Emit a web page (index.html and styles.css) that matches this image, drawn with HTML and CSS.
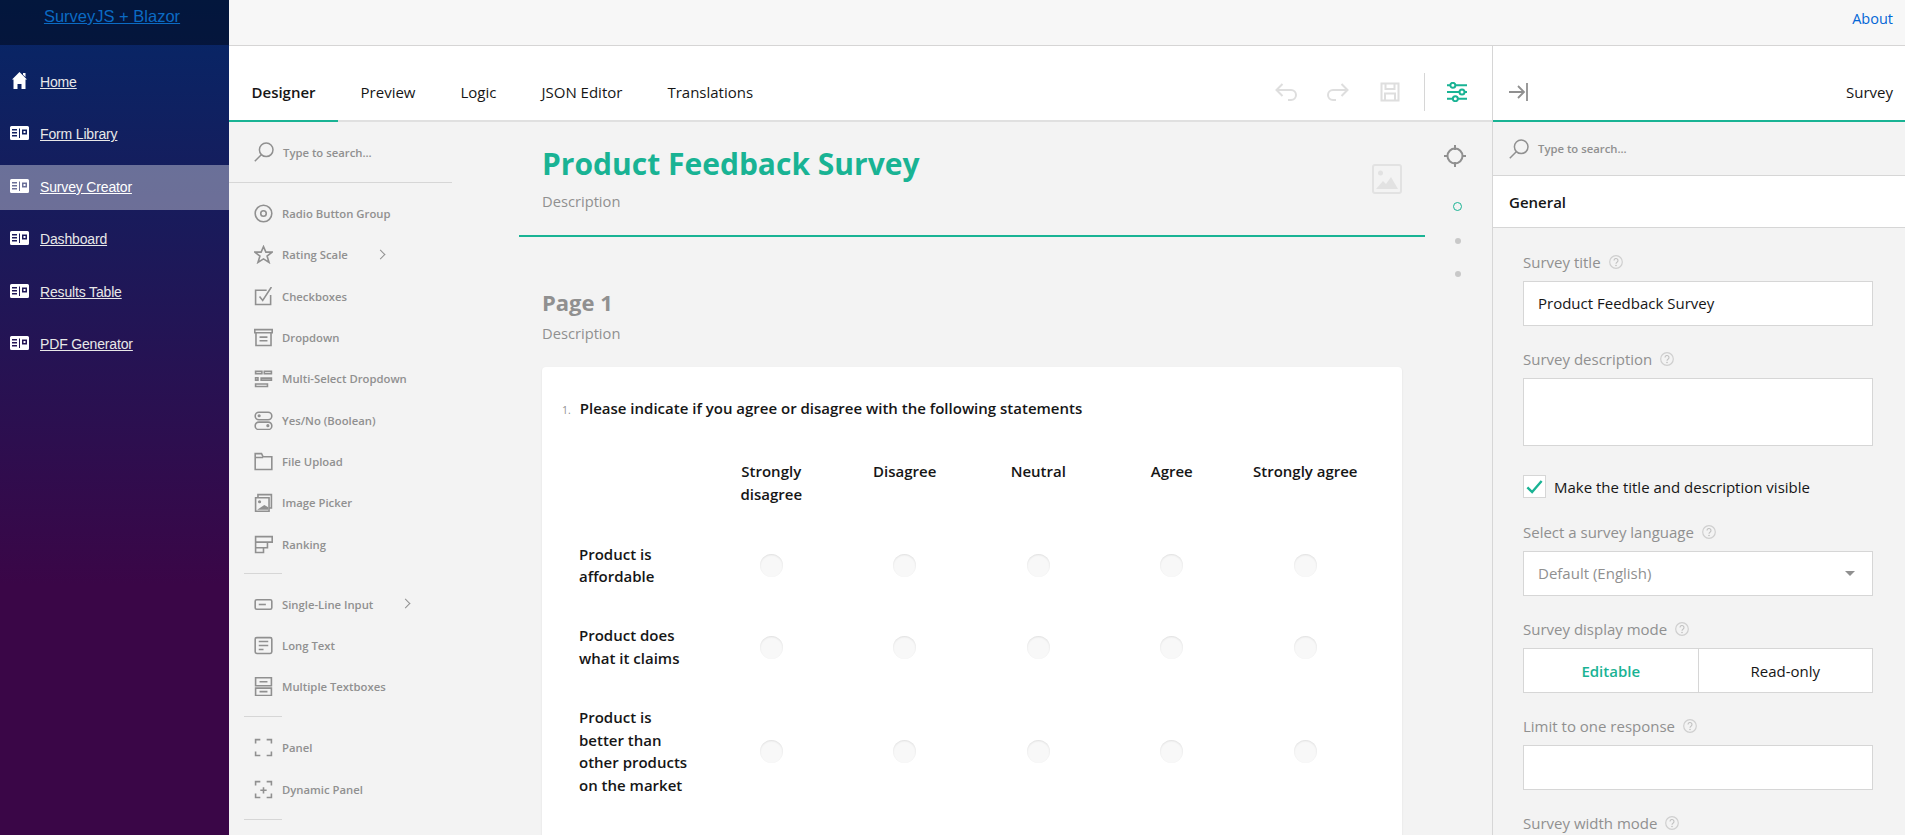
FILE: index.html
```html
<!DOCTYPE html>
<html lang="en">
<head>
<meta charset="utf-8">
<title>SurveyJS + Blazor</title>
<link rel="stylesheet" href="styles.css">
</head>
<body>
<svg class="defs" width="0" height="0" aria-hidden="true">
  <symbol id="i-card" viewBox="0 0 19 14"><path fill="#fff" fill-rule="evenodd" d="M1.500 0h16A1.500 1.500 0 0 1 19 1.500v11a1.500 1.500 0 0 1-1.500 1.500h-16A1.500 1.500 0 0 1 0 12.500v-11A1.500 1.500 0 0 1 1.500 0ZM2 3v1.500h5V3Zm0 3v1.500h5V6Zm0 3v1.500h5V9Zm7-6.500V12h1V2.500ZM12 3.500v5h5v-5Zm1.500 1.500h2v2h-2Z"/></symbol>
  <symbol id="i-search" viewBox="0 0 20 20"><circle cx="12.200" cy="7.800" r="6.800" fill="none" stroke="currentColor" stroke-width="1.500"/><path d="M7.500 12.500 .8 19.200" stroke="currentColor" stroke-width="1.500" fill="none"/></symbol>
  <symbol id="i-help" viewBox="0 0 14 14"><circle cx="7" cy="7" r="6.300" fill="none" stroke="#cfcfcf" stroke-width="1.200"/><path d="M5 5.500a2 2 0 1 1 3 1.700c-.7.400-1 .8-1 1.600" fill="none" stroke="#c0c0c0" stroke-width="1.100"/><circle cx="7" cy="10.500" r=".8" fill="#c0c0c0"/></symbol>
</svg>

<div class="app">
  <aside class="sidebar">
    <div class="brand"><a class="brand-link" href="#">SurveyJS + Blazor</a></div>
    <nav class="nav">
      <a class="nav-item" href="#">
        <svg class="nav-icon" viewBox="0 0 19 19"><path fill="#fff" d="M9.500 1 17 8.500h-1.500V18h-4v-5h-4v5h-4V8.500H2l6-6 .5-.5ZM13 2h2.500v4L13 3.800Z"/></svg>
        <span>Home</span>
      </a>
      <a class="nav-item" href="#"><svg class="nav-icon rich"><use href="#i-card"/></svg><span>Form Library</span></a>
      <a class="nav-item active" href="#"><svg class="nav-icon rich"><use href="#i-card"/></svg><span>Survey Creator</span></a>
      <a class="nav-item" href="#"><svg class="nav-icon rich"><use href="#i-card"/></svg><span>Dashboard</span></a>
      <a class="nav-item" href="#"><svg class="nav-icon rich"><use href="#i-card"/></svg><span>Results Table</span></a>
      <a class="nav-item" href="#"><svg class="nav-icon rich"><use href="#i-card"/></svg><span>PDF Generator</span></a>
    </nav>
  </aside>

  <main class="main">
    <header class="topbar"><a class="about" href="#">About</a></header>
    <div class="creator">
      <section class="workspace">
        <div class="tabbar">
          <div class="tabs">
            <div class="tab selected">Designer</div>
            <div class="tab">Preview</div>
            <div class="tab">Logic</div>
            <div class="tab">JSON Editor</div>
            <div class="tab">Translations</div>
          </div>
          <div class="tools">
            <svg class="tool" viewBox="0 0 24 24"><path d="M8.500 4 2.500 10l6 6M2.500 10H17a5 5 0 0 1 5 5v0a5 5 0 0 1-5 5h-3" fill="none" stroke="#dedede" stroke-width="2"/></svg>
            <svg class="tool" viewBox="0 0 24 24"><path d="M15.500 4l6 6-6 6M21.500 10H7a5 5 0 0 0-5 5v0a5 5 0 0 0 5 5h3" fill="none" stroke="#dedede" stroke-width="2"/></svg>
            <svg class="tool" viewBox="0 0 24 24"><path d="M3.500 3.500h17v17h-17ZM7.500 3.500v5.500h9V3.500M7 20.500v-7h10v7" fill="none" stroke="#dedede" stroke-width="2"/></svg>
            <span class="tool-sep"></span>
            <svg class="tool settings" viewBox="0 0 24 24"><g fill="none" stroke="#19b394" stroke-width="2.400"><circle cx="7" cy="4" r="3"/><circle cx="18" cy="12" r="3"/><circle cx="10" cy="20" r="3"/><path d="M10 4h14M0 12h15M21 12h3M13 20h11M0 4h4M0 20h7"/></g></svg>
          </div>
        </div>

        <div class="design">
          <div class="toolbox">
            <div class="tb-search">
              <svg class="tb-search-icon"><use href="#i-search"/></svg>
              <span>Type to search...</span>
            </div>
            <ul class="tb-list">
              <li class="tb-item"><svg class="ti" viewBox="0 0 24 24"><circle cx="12" cy="12" r="10.500" class="s"/><circle cx="12" cy="12" r="3.500" class="s"/></svg>Radio Button Group</li>
              <li class="tb-item"><svg class="ti" viewBox="0 0 24 24"><path class="s" d="M12 2l3 7h8l-6.500 5 2.500 8-7-4.500L5 22l2.500-8L1 9h8Z"/></svg>Rating Scale<span class="chev chev-a"></span></li>
              <li class="tb-item"><svg class="ti" viewBox="0 0 24 24"><path class="s" d="M21 10v12H2V4h14"/><path class="s" d="M7 12l4 5L22 0"/></svg>Checkboxes</li>
              <li class="tb-item"><svg class="ti" viewBox="0 0 24 24"><path class="s" d="M1 2h22v4H1ZM2.500 6v16h19V6M7 11.500h10M7 16h10"/></svg>Dropdown</li>
              <li class="tb-item"><svg class="ti" viewBox="0 0 24 24"><path class="s" d="M2 3h8v3H2ZM13 3h9v3h-9ZM2 11h3v3H2ZM9 11.500h13v2.500H9ZM2 19h15v3H2Z"/></svg>Multi-Select Dropdown</li>
              <li class="tb-item"><svg class="ti" viewBox="0 0 24 24"><rect x="1.500" y="1.500" width="21" height="9.500" rx="4.700" class="s"/><rect x="1.500" y="14" width="21" height="9.500" rx="4.700" class="s"/><circle cx="6.500" cy="6" r="2" fill="#909090"/><circle cx="17.500" cy="18.500" r="2" fill="#909090"/></svg>Yes/No (Boolean)</li>
              <li class="tb-item"><svg class="ti" viewBox="0 0 24 24"><path class="s" d="M1.500 22V2h8l2 4h11v16ZM1.500 7h10"/></svg>File Upload</li>
              <li class="tb-item"><svg class="ti" viewBox="0 0 24 24"><path class="s" d="M2 6h17v17H2ZM5 6V2h17v17h-3"/><circle cx="7" cy="11" r="2" fill="#909090"/><path fill="#909090" d="M4 21l9-6 5 3v3Z"/></svg>Image Picker</li>
              <li class="tb-item"><svg class="ti" viewBox="0 0 24 24"><path class="s" d="M2 2h21v7H2ZM2 9h15v7H2ZM2 16h10v6H2Z"/></svg>Ranking</li>
              <li class="tb-sep tb-sep-a"></li>
              <li class="tb-item"><svg class="ti" viewBox="0 0 24 24"><rect x="1.500" y="6" width="21" height="12" rx="2" class="s"/><path class="s" d="M6 12h9"/></svg>Single-Line Input<span class="chev chev-b"></span></li>
              <li class="tb-item"><svg class="ti" viewBox="0 0 24 24"><rect x="1.500" y="2" width="21" height="20" rx="2" class="s"/><path class="s" d="M6 7h12M6 12h12M6 17h6"/></svg>Long Text</li>
              <li class="tb-item"><svg class="ti" viewBox="0 0 24 24"><path class="s" d="M2 1h20v10H2ZM2 14h20v9.500H2ZM7 6h10M7 18.500h10"/></svg>Multiple Textboxes</li>
              <li class="tb-sep tb-sep-b"></li>
              <li class="tb-item"><svg class="ti" viewBox="0 0 24 24"><path class="s" d="M2 7V2h6M16 2h6v5M22 17v5h-6M8 22H2v-5"/></svg>Panel</li>
              <li class="tb-item"><svg class="ti" viewBox="0 0 24 24"><path class="s" d="M2 7V2h6M16 2h6v5M22 17v5h-6M8 22H2v-5M12 9v8M8 13h8"/></svg>Dynamic Panel</li>
              <li class="tb-sep tb-sep-c"></li>
            </ul>
          </div>

          <div class="canvas">
            <div class="survey-head">
              <div class="survey-head-text">
                <h1 class="survey-title">Product Feedback Survey</h1>
                <div class="desc">Description</div>
              </div>
              <svg class="logo-ph" viewBox="0 0 30 30"><rect x="1" y="1" width="28" height="28" rx="2" fill="none" stroke="#e2e2e2" stroke-width="2"/><circle cx="8.500" cy="9" r="2.500" fill="#e2e2e2"/><path fill="#e2e2e2" d="M4 25l7-8 3 3 5-7 7 12Z"/></svg>
            </div>
            <div class="page">
              <h2 class="page-title">Page 1</h2>
              <div class="desc">Description</div>
              <div class="q-card">
                <div class="q-head"><span class="q-num">1.</span><span class="q-title">Please indicate if you agree or disagree with the following statements</span></div>
                <table class="matrix">
                  <thead>
                    <tr><th class="rowhead"></th><th>Strongly disagree</th><th>Disagree</th><th>Neutral</th><th>Agree</th><th>Strongly agree</th></tr>
                  </thead>
                  <tbody>
                    <tr><td class="rowhead">Product is affordable</td><td><span class="radio"></span></td><td><span class="radio"></span></td><td><span class="radio"></span></td><td><span class="radio"></span></td><td><span class="radio"></span></td></tr>
                    <tr><td class="rowhead">Product does what it claims</td><td><span class="radio"></span></td><td><span class="radio"></span></td><td><span class="radio"></span></td><td><span class="radio"></span></td><td><span class="radio"></span></td></tr>
                    <tr><td class="rowhead">Product is better than other products on the market</td><td><span class="radio"></span></td><td><span class="radio"></span></td><td><span class="radio"></span></td><td><span class="radio"></span></td><td><span class="radio"></span></td></tr>
                  </tbody>
                </table>
              </div>
            </div>
          </div>

          <div class="pager">
            <svg class="target" viewBox="0 0 24 24"><circle cx="12" cy="12" r="7.500" fill="none" stroke="#909090" stroke-width="2"/><path d="M12 1v5M12 18v5M1 12h4M19 12h4" stroke="#909090" stroke-width="2"/></svg>
            <span class="dot current"></span>
            <span class="dot"></span>
            <span class="dot"></span>
          </div>
        </div>
      </section>

      <aside class="props">
        <div class="props-head">
          <svg class="collapse" viewBox="0 0 19 24"><path d="M0 12h15M9 6l6 6-6 6M18 3v18" fill="none" stroke="#909090" stroke-width="1.800"/></svg>
          <span class="props-name">Survey</span>
        </div>
        <div class="props-search">
          <svg class="tb-search-icon"><use href="#i-search"/></svg>
          <span>Type to search...</span>
        </div>
        <div class="props-cat">General</div>
        <form class="props-form">
          <div class="field">
            <div class="lbl">Survey title <svg class="help"><use href="#i-help"/></svg></div>
            <div class="box">Product Feedback Survey</div>
          </div>
          <div class="field">
            <div class="lbl">Survey description <svg class="help"><use href="#i-help"/></svg></div>
            <div class="box box-tall"></div>
          </div>
          <div class="check-row">
            <span class="check"><svg class="check-mark" viewBox="0 0 24 24"><path d="M3 13l6 6L21 5" fill="none" stroke="#19b394" stroke-width="3"/></svg></span>
            <span>Make the title and description visible</span>
          </div>
          <div class="field">
            <div class="lbl">Select a survey language <svg class="help"><use href="#i-help"/></svg></div>
            <div class="box box-select"><span>Default (English)</span><span class="caret"></span></div>
          </div>
          <div class="field">
            <div class="lbl">Survey display mode <svg class="help"><use href="#i-help"/></svg></div>
            <div class="btn-group"><span class="seg on">Editable</span><span class="seg">Read-only</span></div>
          </div>
          <div class="field">
            <div class="lbl">Limit to one response <svg class="help"><use href="#i-help"/></svg></div>
            <div class="box"></div>
          </div>
          <div class="field">
            <div class="lbl">Survey width mode <svg class="help"><use href="#i-help"/></svg></div>
          </div>
        </form>
      </aside>
    </div>
  </main>
</div>
</body>
</html>
```

FILE: styles.css
```css
* { box-sizing: border-box; }
html, body { margin: 0; height: 100%; overflow: hidden; }
body { font-family: "Open Sans", "Liberation Sans", sans-serif; font-size: 15px; color: #161616; background: #fff; }
.defs { position: absolute; }

.app { display: flex; height: 835px; }

/* sidebar */
.sidebar { width: 229px; flex: none; background: linear-gradient(180deg, #052767 0%, #3a0647 70%); font-family: "Liberation Sans", Arial, sans-serif; }
.brand { height: 45px; background: rgba(0,0,0,.4); text-align: center; padding: 6px 5px 0 0; }
.brand-link { color: #0b6bc4; font-size: 16.500px; text-decoration: underline; line-height: 20px; }
.nav { padding-top: 15px; display: flex; flex-direction: column; gap: 7.500px; }
.nav-item { height: 45px; display: flex; align-items: center; gap: 11px; padding: 0 0 1.500px 10px; color: #e8e8e8; font-size: 14px; letter-spacing: -.16px; text-decoration: underline; }
.nav-item.active { background: rgba(255,255,255,.37); color: #fff; }
.nav-icon { width: 19px; height: 19px; flex: none; margin-top: -2px; }
.nav-icon.rich { height: 14px; }

/* top bar */
.main { flex: 1; min-width: 0; display: flex; flex-direction: column; }
.topbar { height: 46px; flex: none; background: #f7f7f7; border-bottom: 1px solid #d6d5d5; display: flex; justify-content: flex-end; align-items: center; padding: 0 12px 8px 0; }
.about { color: #0366d6; font-size: 14.500px; text-decoration: none; }

.creator { flex: 1; display: flex; min-height: 0; }
.workspace { flex: 1; min-width: 0; display: flex; flex-direction: column; }

/* tabs */
.tabbar { height: 76px; flex: none; display: flex; align-items: flex-start; justify-content: space-between; border-bottom: 2px solid #e0e0e0; background: #fff; }
.tabs { display: flex; }
.tab { padding: 18px 22.500px 0; height: 76px; display: flex; align-items: center; border-bottom: 2px solid transparent; font-size: 15px; color: #161616; }
.tab.selected { font-weight: 600; border-bottom-color: #19b394; }
.tools { display: flex; align-items: center; height: 74px; padding: 18px 25px 0 0; }
.tool { width: 24px; height: 24px; margin-left: 28px; }
.tool-sep { width: 1px; height: 38px; background: #d6d6d6; margin-left: 22px; }
.tool.settings { width: 20px; height: 20px; margin-left: 22px; }

/* design surface */
.design { flex: 1; min-height: 0; display: flex; background: #f3f3f3; }

.toolbox { width: 223px; flex: none; }
.tb-search { height: 61px; display: flex; align-items: center; gap: 9px; padding: 0 0 0 25px; border-bottom: 1px solid #d6d6d6; font-size: 11.300px; font-weight: 600; color: #909090; }
.tb-search-icon { width: 20px; height: 20px; color: #909090; flex: none; }
.tb-list { list-style: none; margin: 10px 0 0; padding: 0; }
.tb-item { position: relative; height: 41.300px; display: flex; align-items: center; gap: 9px; padding-left: 25px; font-size: 11.300px; font-weight: 600; color: #909090; }
.ti { width: 19px; height: 19px; flex: none; }
.s { fill: none; stroke: #909090; stroke-width: 2; }
.tb-sep { width: 38px; height: 1px; background: #d6d6d6; margin-left: 15px; }
.tb-sep-a { margin-top: 8.300px; margin-bottom: 9.400px; }
.tb-sep-b { margin-top: 8.700px; margin-bottom: 10.400px; }
.tb-sep-c { margin-top: 9px; }
.chev { position: absolute; top: 17px; width: 7px; height: 7px; border-top: 1px solid #909090; border-right: 1px solid #909090; transform: rotate(45deg); }
.chev-a { left: 148px; }
.chev-b { left: 173px; }

.canvas { flex: 1; min-width: 0; overflow: hidden; padding-left: 67px; }
.survey-head { width: 906px; height: 115px; border-bottom: 2px solid #19b394; padding: 20px 23px 0; display: flex; justify-content: space-between; }
.survey-title { margin: 0; font-size: 30px; line-height: 44px; font-weight: 700; color: #19b394; }
.desc { font-size: 14.700px; line-height: 20px; color: #909090; }
.survey-head-text .desc { margin-top: 5px; }
.logo-ph { width: 30px; height: 30px; margin-top: 22px; }
.page { padding: 0 0 0 23px; width: 883px; }
.page-title { margin: 47px 0 0; font-size: 22px; line-height: 36px; font-weight: 700; color: #909090; }
.page .desc { margin-top: 3px; }
.q-card { margin-top: 24px; width: 860px; height: 500px; background: #fff; border-radius: 4px; box-shadow: 0 1px 2px rgba(0,0,0,.1); padding: 30px 20px 60px; }
.q-head { display: flex; align-items: baseline; gap: 9px; }
.q-num { font-size: 10.500px; color: #909090; }
.q-title { font-size: 15px; line-height: 22px; font-weight: 600; color: #161616; }

.matrix { border-collapse: collapse; table-layout: fixed; width: 813px; margin-top: 41px; margin-left: -3px; }
.matrix th { width: 133.500px; padding: 0 14px 18.500px; font-size: 15px; line-height: 23px; font-weight: 600; vertical-align: top; text-align: center; color: #161616; }
.matrix th.rowhead { width: 145.500px; }
.matrix td { padding: 0; text-align: center; vertical-align: middle; }
.matrix td.rowhead { text-align: left; padding: 18px 13.500px 18.800px 20px; font-size: 15px; line-height: 22.500px; font-weight: 600; }
.radio { display: inline-block; width: 23px; height: 23px; border-radius: 50%; background: #f8f8f8; box-shadow: inset 0 1px 2px rgba(0,0,0,.1); vertical-align: middle; }

.pager { width: 67px; flex: none; display: flex; flex-direction: column; align-items: center; padding-top: 22px; }
.target { width: 24px; height: 24px; margin-left: -7px; }
.dot { width: 6px; height: 6px; border-radius: 50%; background: #c8c8c8; margin: 27px 0 0 -2px; }
.dot.current { width: 9px; height: 9px; background: none; border: 1px solid #19b394; margin-top: 34px; }

/* property panel */
.props { width: 413px; flex: none; border-left: 1px solid #d6d6d6; background: #f3f3f3; display: flex; flex-direction: column; }
.props-head { height: 76px; flex: none; background: #fff; border-bottom: 2px solid #19b394; display: flex; align-items: center; justify-content: space-between; padding: 18px 12px 0 16px; }
.collapse { width: 19px; height: 24px; }
.props-search { height: 54px; flex: none; display: flex; align-items: center; gap: 9px; padding-left: 16px; border-bottom: 1px solid #d6d6d6; font-size: 11.300px; font-weight: 600; color: #909090; }
.props-cat { height: 52px; flex: none; background: #fff; border-bottom: 1px solid #d6d6d6; display: flex; align-items: center; padding-left: 16px; font-weight: 600; }
.props-form { padding: 24px 32px 0 30px; }
.field { margin-bottom: 23px; }
.lbl { line-height: 20px; color: #909090; display: flex; align-items: center; gap: 8px; margin-bottom: 9px; }
.help { width: 14px; height: 14px; }
.box { height: 45px; background: #fff; border: 1px solid #d6d6d6; padding: 0 14px 1px; display: flex; align-items: center; color: #161616; }
.box-tall { height: 68px; }
.box-select { justify-content: space-between; color: #909090; }
.caret { width: 0; height: 0; border-left: 5px solid transparent; border-right: 5px solid transparent; border-top: 5px solid #909090; margin-right: 3px; }
.check-row { display: flex; align-items: center; gap: 8px; margin: 29px 0 24px; height: 23px; }
.check { width: 23px; height: 23px; background: #fff; border: 1px solid #d6d6d6; display: flex; align-items: center; justify-content: center; }
.check-mark { width: 19px; height: 19px; }
.btn-group { display: flex; height: 45px; background: #fff; border: 1px solid #d6d6d6; }
.seg { flex: 1; display: flex; align-items: center; justify-content: center; }
.seg.on { color: #19b394; font-weight: 600; border-right: 1px solid #d6d6d6; }
```
